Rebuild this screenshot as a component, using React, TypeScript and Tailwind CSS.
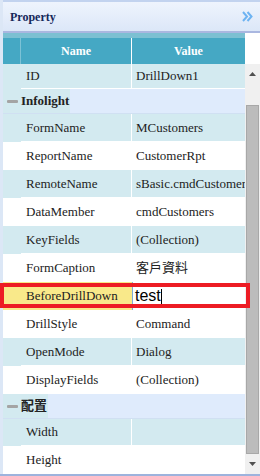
type Row = { name: string; value: string; alt: boolean };

const infolight: Row[] = [
  { name: "FormName", value: "MCustomers", alt: true },
  { name: "ReportName", value: "CustomerRpt", alt: false },
  { name: "RemoteName", value: "sBasic.cmdCustomers", alt: true },
  { name: "DataMember", value: "cmdCustomers", alt: false },
  { name: "KeyFields", value: "(Collection)", alt: true },
  { name: "FormCaption", value: "客戶資料", alt: false },
];

const infolight2: Row[] = [
  { name: "DrillStyle", value: "Command", alt: false },
  { name: "OpenMode", value: "Dialog", alt: true },
  { name: "DisplayFields", value: "(Collection)", alt: false },
];

function DataRow({ row, h = "h-[28px]" }: { row: Row; h?: string }) {
  const bg = row.alt ? "bg-[#d3eaf0]" : "bg-white";
  return (
    <div className={`flex ${h} ${bg}`}>
      <div className="w-[18px] shrink-0" />
      <div className="w-[111px] shrink-0 flex items-center pl-[5px] border-b border-r border-white whitespace-nowrap overflow-hidden">
        {row.name}
      </div>
      <div className="flex-1 flex items-center pl-[4px] border-b border-white whitespace-nowrap overflow-hidden">
        {row.value}
      </div>
    </div>
  );
}

function GroupRow({ label }: { label: string }) {
  return (
    <div className="flex h-[25px] bg-[#dfebfc] border-b border-[#d0e0f2]">
      <div className="w-[18px] shrink-0 bg-[#d3eaf0] flex items-center justify-center">
        <div className="w-[11px] h-[3px] bg-[#a4a4a4] rounded-[1px]" />
      </div>
      <div className="flex items-center bg-[#d3eaf0] font-bold pr-[1px] font-['Liberation_Serif','Noto_Sans_CJK_TC',serif]">
        {label}
      </div>
    </div>
  );
}

function ScrollBar() {
  return (
    <div className="w-[15px] flex flex-col">
      <div className="h-[31px] bg-white" />
      <div className="flex-1 flex flex-col bg-[#f0f0f0]">
        <div className="h-[20px] flex items-center justify-center">
          <svg width="7" height="4" viewBox="0 0 7 4">
            <path d="M0 4 L3.5 0 L7 4 Z" fill="#505050" />
          </svg>
        </div>
        <div className="h-[21px]" />
        <div className="h-[349px] mx-[1px] bg-[#bcbcbc] border border-[#a8a8a8]" />
        <div className="flex-1 flex items-center justify-center">
          <svg width="7" height="4" viewBox="0 0 7 4">
            <path d="M0 0 L3.5 4 L7 0 Z" fill="#505050" />
          </svg>
        </div>
      </div>
    </div>
  );
}

export default function App() {
  return (
    <div className="w-[260px] h-[476px] bg-white flex flex-col overflow-hidden font-['Liberation_Serif','Noto_Sans_CJK_TC',serif] text-[13px] text-[#222]">
      <div className="flex-1 flex min-h-0">
        <div className="w-[3px] bg-[#dce7f6]" />
        <div className="flex-1 flex flex-col min-w-0">
          {/* panel header */}
          <div className="h-[33px] border-t-2 border-[#c2d3ef] border-b-2 border-b-[#aab7e0] bg-gradient-to-b from-[#eef4fd] to-[#dce7f8] flex items-center justify-between pl-[7px] pr-[6px]">
            <span className="font-bold text-[12px] text-[#15285a]">Property</span>
            <svg width="11" height="11" viewBox="0 0 11 11" className="mr-[1px]">
              <path d="M1 1 L5 5.5 L1 10" fill="none" stroke="#6db3f2" strokeWidth="2" />
              <path d="M5.5 1 L9.5 5.5 L5.5 10" fill="none" stroke="#6db3f2" strokeWidth="2" />
            </svg>
          </div>

          <div className="flex-1 flex min-h-0">
            <div className="w-[242px] flex flex-col">
              {/* column header */}
              <div className="h-[31px] flex border-t-[5px] border-[#7cc0d2] bg-[#45a8c4] text-white font-bold text-[12px]">
                <div className="w-[18px] shrink-0 border-r border-[#7cc2d6]" />
                <div className="w-[111px] shrink-0 flex items-center justify-center border-r border-white">Name</div>
                <div className="flex-1 flex items-center justify-center">Value</div>
              </div>

              <DataRow row={{ name: "ID", value: "DrillDown1", alt: true }} h="h-[25px]" />
              <GroupRow label="Infolight" />
              {infolight.map((r) => (
                <DataRow key={r.name} row={r} />
              ))}

              {/* selected row */}
              <div className="relative flex h-[28px]">
                <div className="w-[129px] shrink-0 bg-[#f9e98a] flex items-center pl-[23px]">BeforeDrillDown</div>
                <div className="flex-1 bg-white border-l border-[#7eadd9] flex items-center pl-[2px] font-['Liberation_Sans',sans-serif] text-[16px] text-black">
                  test<span className="w-px h-[15px] bg-black" />
                </div>
                <div className="absolute left-[-3px] top-[1px] w-[250px] h-[25px] border-4 border-[#ed1c24] pointer-events-none" />
              </div>

              {infolight2.map((r) => (
                <DataRow key={r.name} row={r} />
              ))}
              <GroupRow label="配置" />
              <DataRow row={{ name: "Width", value: "", alt: true }} h="h-[27px]" />
              <DataRow row={{ name: "Height", value: "", alt: false }} />
            </div>
            <ScrollBar />
          </div>
        </div>
      </div>
      <div className="h-[2px] bg-[#9db3dd]" />
    </div>
  );
}
